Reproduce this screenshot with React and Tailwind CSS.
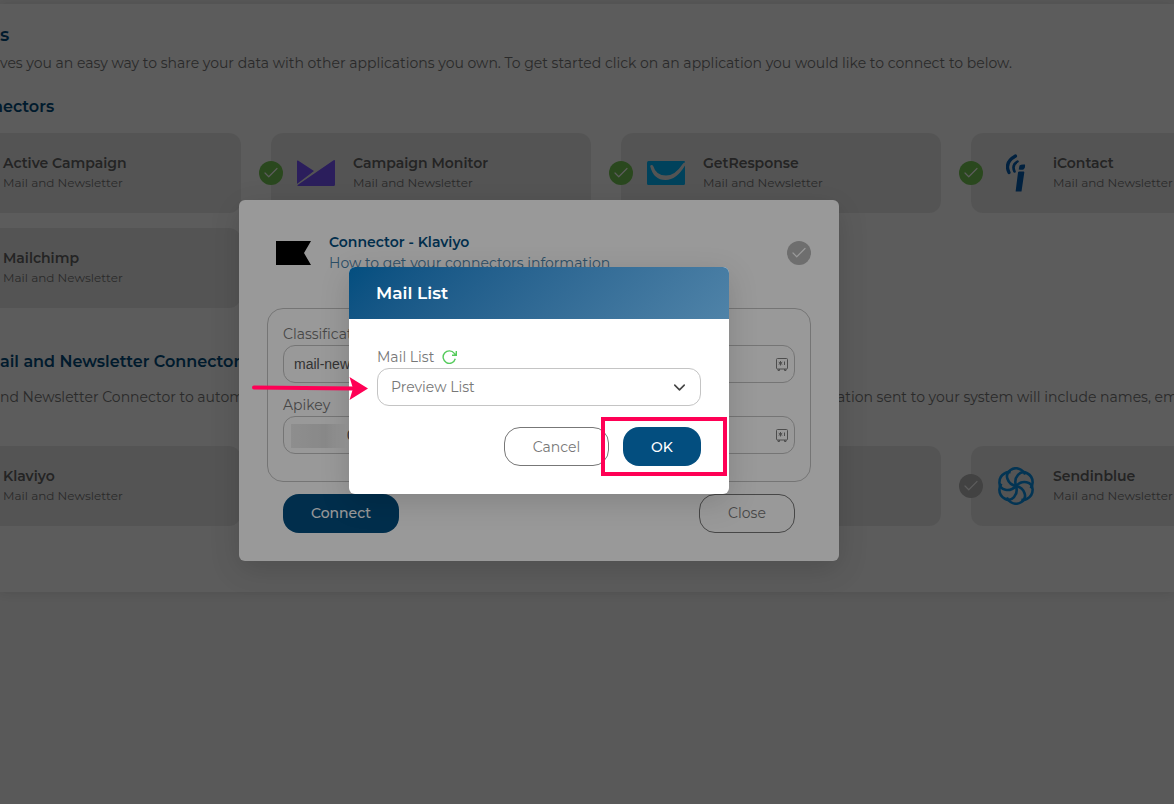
import { Check, ChevronDown } from "lucide-react";

function StatusBadge({ on, className = "" }) {
  return (
    <span
      className={`flex size-6 shrink-0 items-center justify-center rounded-full text-white ${on ? "bg-[#76c855]" : "bg-[#b8b8b8]"} ${className}`}
    >
      <Check size={18} strokeWidth={1.6} />
    </span>
  );
}

function CampaignMonitorLogo() {
  return (
    <svg width="38" height="26" viewBox="0 0 38 26" fill="#7856ff" aria-hidden="true">
      <path d="M0 1.2Q0 0 1 .6L17 11 .3 23.8H0ZM36.6.3Q38-.4 38 1V24.5Q38 26 36.6 26H1.4Q.4 26 .2 25.2Z" />
    </svg>
  );
}

function GetResponseLogo() {
  return (
    <svg width="38" height="24" viewBox="0 0 38 24" aria-hidden="true">
      <path d="M1.5 0H37.5L38 1V22.5Q38 24 36.5 24H1.5Q0 24 0 22.5V1.5Q0 0 1.5 0Z" fill="#00baff" />
      <path d="M3.2 5.2Q3.4 3.8 4.9 3.9Q6 4.100 6.300 5.300Q9 14.600 19 14.600Q28 14.600 35.500 3.200Q37 1 38 1.500V4.500Q29.500 19 18.500 19Q6.500 19 3.200 5.200Z" fill="#ececec" />
    </svg>
  );
}

function IContactLogo() {
  return (
    <svg width="20" height="38" viewBox="0 0 20 38" aria-hidden="true">
      <g fill="none" stroke="#045cb0" strokeLinecap="round">
        <path d="M9.500 2Q-2 8.500 3 18.500" strokeWidth="3.200" />
        <path d="M11.500 7.500Q5.500 11 8.500 17.500" strokeWidth="2.600" />
      </g>
      <path d="M13.500 11.500Q15 10 19 10.500Q19.500 14.500 17.500 15.500Q15.500 16.200 12.700 15.500ZM12 18.500Q12.200 17.400 13.400 17.400H17.600Q18.400 17.400 18.300 18.500L15.500 37.500H9.600Z" fill="#045cb0" />
    </svg>
  );
}

const PETALS = [0, 60, 120, 180, 240, 300];

function SendinblueLogo() {
  return (
    <svg width="38" height="38" viewBox="-19 -19 38 38" fill="none" stroke="#0a92e8" strokeWidth="2.600" aria-hidden="true">
      {PETALS.map((a) => (
        <path key={a} d="M0 0C-9 -2 -12 -12 -5.500 -16Q0 -19.500 5.500 -16Q8 -14.500 9.200 -11.500" transform={`rotate(${a})`} />
      ))}
    </svg>
  );
}

function Card({ name, on, logo }) {
  return (
    <li className="relative flex h-20 items-center rounded-xl bg-[#ececec]">
      <StatusBadge on={on} className="absolute -left-3" />
      <span className="ml-[26px] flex w-[38px] justify-center">{logo}</span>
      <div className="ml-[18px]">
        <p className="text-[14px] leading-5 font-semibold text-[#666]">{name}</p>
        <p className="text-[12px] leading-5 text-[#777]">Mail and Newsletter</p>
      </div>
    </li>
  );
}

function EmptyCard() {
  return <li className="h-20 rounded-xl bg-[#ececec]" />;
}

function VaultIcon() {
  return (
    <svg className="absolute right-1.5 top-3" width="14" height="14" viewBox="0 0 14 14" fill="none" stroke="#808080" aria-hidden="true">
      <path d="M2.500 1.500H11.500Q12.500 1.500 12.500 2.500V11Q12.500 12 11.500 12H2.500Q1.500 12 1.500 11V2.500Q1.500 1.500 2.500 1.500ZM3 12V13.500H4.500V12M9.500 12V13.500H11V12M9.500 4.500V8" />
      <path d="M5.500 4V8.500M3.700 5.200 7.300 7.300M3.700 7.300 7.300 5.200" />
    </svg>
  );
}

function RefreshIcon() {
  return (
    <svg width="15" height="15" viewBox="0 0 15 15" fill="none" stroke="#55cb5c" strokeWidth="1.400" aria-hidden="true">
      <path d="M13.300 8.800A6.200 6.200 0 1 1 12.300 3.400L14 5.200M14.300 1V5.300H10" />
    </svg>
  );
}

const gridClass = "-ml-[79px] grid grid-cols-[repeat(4,320px)] gap-x-[30px] gap-y-[15px]";

export default function App() {
  return (
    <div className="relative min-h-screen overflow-hidden bg-[#f7f7f7] font-[Montserrat,Inter,sans-serif] text-[#777]">
      <main className="mt-1 bg-white pt-[19px] pb-[66px] whitespace-nowrap shadow-[0_0_10px_rgba(0,0,0,0.12)]">
        <h1 className="text-[18px] leading-6 font-semibold text-[#034e7f]">s</h1>
        <p className="mt-1 text-[14px] leading-6">
          ves you an easy way to share your data with other applications you own. To get started click on an application you would like to connect to below.
        </p>
        <h2 className="mt-5 -ml-2 text-[16px] leading-6 font-semibold text-[#034e7f]">nectors</h2>
        <ul className={`mt-3.5 ${gridClass}`}>
          <Card name="Active Campaign" on />
          <Card name="Campaign Monitor" on logo={<CampaignMonitorLogo />} />
          <Card name="GetResponse" on logo={<GetResponseLogo />} />
          <Card name="iContact" on logo={<IContactLogo />} />
          <Card name="Mailchimp" on />
        </ul>
        <h2 className="mt-[42px] text-[16px] leading-6 font-semibold text-[#034e7f]">ail and Newsletter Connector</h2>
        <p className="mt-[11px] flex text-[14px] leading-6">
          <span className="w-[837px] shrink-0">nd Newsletter Connector to autom</span>
          <span>ation sent to your system will include names, em</span>
        </p>
        <ul className={`mt-[37px] ${gridClass}`}>
          <Card name="Klaviyo" />
          <EmptyCard />
          <EmptyCard />
          <Card name="Sendinblue" logo={<SendinblueLogo />} />
        </ul>
      </main>

      <div className="absolute inset-0 flex items-center justify-center bg-black/40 pr-24 pb-[43px]">
        <section role="dialog" aria-label="Connector - Klaviyo" className="w-[600px] rounded-md bg-white p-7 shadow-[0_8px_30px_rgba(0,0,0,0.15)]">
          <header className="flex h-[50px] items-center pl-[9px]">
            <svg width="35" height="24" viewBox="0 0 35 24" aria-hidden="true">
              <path d="M0 0H35L28 12 35 24H0Z" fill="#000" />
            </svg>
            <div className="ml-[18px] flex-1">
              <h2 className="text-[14px] leading-[21px] font-semibold text-[#034e7f]">Connector - Klaviyo</h2>
              <a href="#help" className="block text-[14px] leading-[21px] text-[#4a82ab]">How to get your connectors information</a>
            </div>
            <StatusBadge />
          </header>
          <div className="mt-[30px] rounded-2xl border border-[#c4c4c4] px-[15px] pt-[15px] pb-[27px] text-[14px] leading-[21px]">
            <label htmlFor="classification" className="block">Classification</label>
            <div className="relative">
              <input id="classification" defaultValue="mail-newsletter" className="h-[38px] w-full rounded-xl border border-[#c4c4c4] px-2.5 font-['Liberation_Sans',sans-serif] text-[14px] text-[#555]" />
              <VaultIcon />
            </div>
            <label htmlFor="apikey" className="mt-3 block">Apikey</label>
            <div className="relative">
              <input id="apikey" defaultValue="0" className="h-[38px] w-full rounded-xl border border-[#c4c4c4] pl-[63px] font-['Liberation_Sans',sans-serif] text-[14px] text-[#555]" />
              <span className="absolute left-2 top-2 h-6 w-14 bg-linear-to-r from-[#ededed] via-[#e4e4e4] via-60% to-[#fff] mix-blend-normal" />
              <VaultIcon />
            </div>
          </div>
          <footer className="mt-3 flex justify-between px-4 text-[14px]">
            <button type="button" className="h-[39px] w-[116px] rounded-2xl bg-[#034e7f] font-medium text-white">Connect</button>
            <button type="button" className="h-[39px] w-24 rounded-2xl border border-[#777]">Close</button>
          </footer>
        </section>
      </div>

      <div className="absolute inset-0 flex items-center justify-center bg-black/40 pr-24 pb-[43px]">
        <section role="dialog" aria-label="Mail List" className="w-[380px] rounded-md bg-white shadow-[0_8px_30px_rgba(0,0,0,0.15)]">
          <h2 className="rounded-t-md bg-linear-135 from-[#034e7f] to-[#4f83a8] px-[27px] text-[17px] leading-[52px] font-semibold text-white">Mail List</h2>
          <div className="p-7 text-[14px] leading-[21px]">
            <div className="flex items-center gap-2">
              <label htmlFor="mail-list">Mail List</label>
              <button type="button" aria-label="Refresh"><RefreshIcon /></button>
            </div>
            <div className="relative">
              <select id="mail-list" className="h-[38px] w-full appearance-none rounded-xl border border-[#c4c4c4] bg-white px-[13px] text-[14px]">
                <option>Preview List</option>
              </select>
              <ChevronDown className="pointer-events-none absolute right-3 top-2.5 text-[#444]" size={19} strokeWidth={2} />
            </div>
            <div className="mt-[21px] flex justify-end gap-3.5">
              <button type="button" className="h-[39px] w-[105px] rounded-2xl border border-[#777] pt-0.5">Cancel</button>
              <div className="relative">
                <button type="button" className="block h-[39px] w-[78px] rounded-2xl bg-[#034e7f] pt-0.5 font-medium text-white">OK</button>
                <span className="pointer-events-none absolute -left-[22px] -right-[26px] -top-2.5 -bottom-2.5 border-4 border-[#ff0055]" />
              </div>
            </div>
          </div>
          <svg className="absolute left-[252px] top-[376px]" width="116" height="25" viewBox="0 0 116 25" aria-hidden="true">
            <path d="M2 11.500 102 12.500" stroke="#ff0055" strokeWidth="4" strokeLinecap="round" />
            <path d="M97.500 1 116 12.500 97.500 24 101 12.500Z" fill="#ff0055" />
          </svg>
        </section>
      </div>
    </div>
  );
}
